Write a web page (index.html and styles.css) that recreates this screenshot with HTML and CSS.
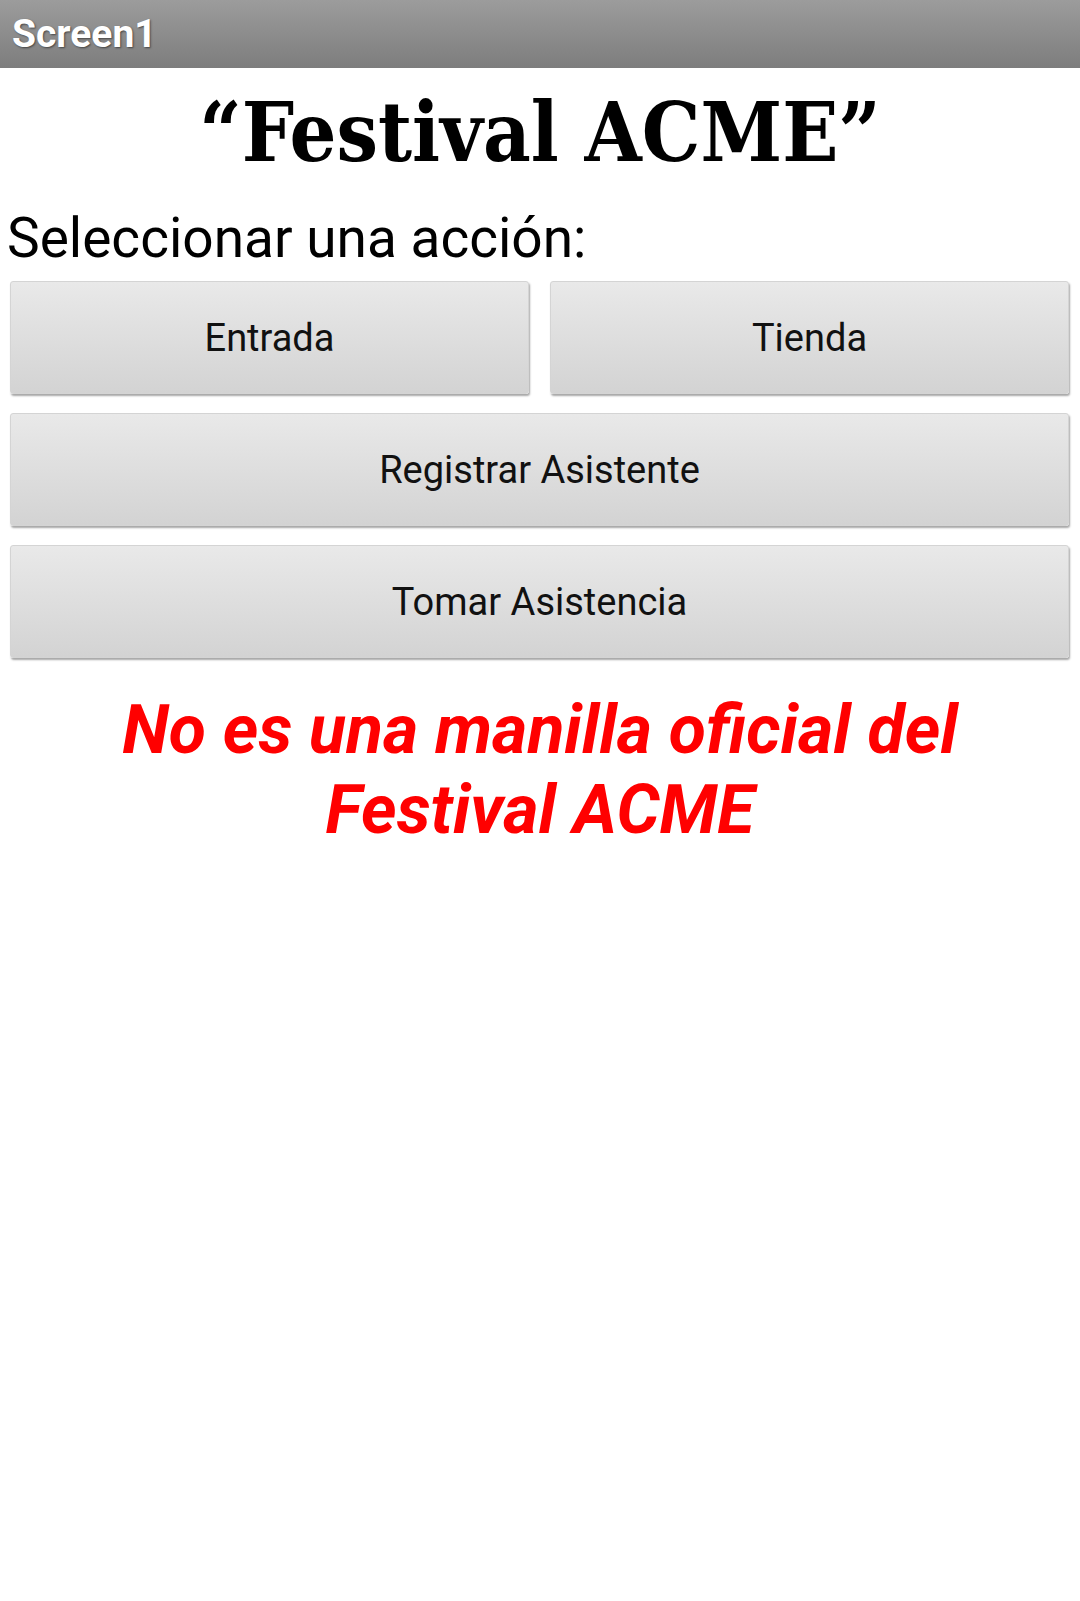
FILE: index.html
```html
<!DOCTYPE html>
<html lang="es">
<head>
<meta charset="utf-8">
<title>Screen1</title>
<link rel="stylesheet" href="styles.css">
</head>
<body>
<header class="titlebar"><span class="titlebar-text">Screen1</span></header>
<main class="screen">
  <h1 class="title">“Festival ACME”</h1>
  <p class="prompt">Seleccionar una acción:</p>
  <div class="actions">
    <button class="btn">Entrada</button>
    <button class="btn">Tienda</button>
    <button class="btn btn-wide">Registrar Asistente</button>
    <button class="btn btn-wide">Tomar Asistencia</button>
  </div>
  <p class="warning">No es una manilla oficial del<br>Festival ACME</p>
</main>
</body>
</html>
```
FILE: styles.css
```css
html, body {
  margin: 0;
  padding: 0;
  background: #ffffff;
}
body {
  width: 1080px;
  min-height: 1601px;
  font-family: Roboto, "Noto Sans", sans-serif;
}
.titlebar {
  height: 68px;
  background: linear-gradient(#9c9c9c, #7d7d7d);
  display: flex;
  align-items: center;
  padding-left: 12px;
  box-sizing: border-box;
}
.titlebar-text {
  color: #ffffff;
  font-family: Roboto, sans-serif;
  font-weight: 700;
  font-size: 39px;
  text-shadow: 1px 1px 2px rgba(0,0,0,0.5);
}
.screen {
  display: flex;
  flex-direction: column;
}
.title {
  margin: 14px 0 0 0;
  text-align: center;
  font-family: "DejaVu Serif Condensed", "DejaVu Serif", serif;
  font-stretch: condensed;
  font-weight: 700;
  font-size: 82px;
  line-height: 100px;
  color: #000;
}
.prompt {
  margin: 18px 0 0 0;
  padding-left: 7px;
  font-size: 55px;
  line-height: 76px;
  color: #000;
}
.actions {
  display: grid;
  grid-template-columns: 1fr 1fr;
  column-gap: 21px;
  row-gap: 19px;
  padding: 5px 11px 0 10px;
}
.btn {
  height: 113px;
  border: 1px solid #d4d4d4;
  border-radius: 3px;
  background: linear-gradient(#e9e9e9, #d3d3d3);
  box-shadow: 1px 2px 2px rgba(0,0,0,0.35);
  font-family: Roboto, sans-serif;
  font-size: 38px;
  color: #111;
  padding: 0;
}
.btn-wide {
  grid-column: 1 / span 2;
}
.warning {
  margin: 32px 0 0 0;
  text-align: center;
  color: #ff0000;
  font-family: Roboto, sans-serif;
  font-weight: 700;
  font-style: italic;
  font-size: 68px;
  line-height: 80px;
}
```
